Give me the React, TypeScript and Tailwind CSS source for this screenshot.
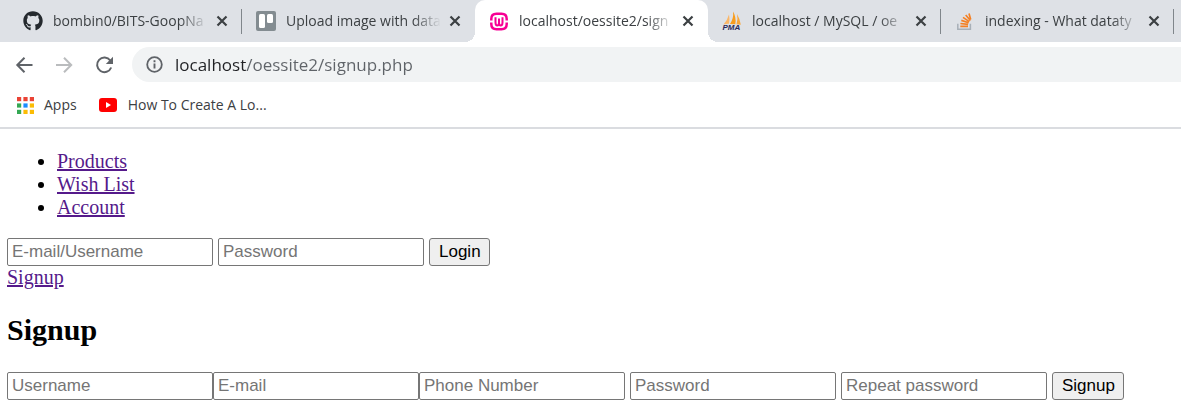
import type { ReactNode } from 'react';
import { FaGithub } from 'react-icons/fa';

function TrelloIcon() {
  return (
    <svg viewBox="0 0 20 20" className="size-5">
      <rect width="20" height="20" rx="2" fill="#838c91" />
      <rect x="3" y="3" width="6" height="14" rx="1.500" fill="#fff" />
      <rect x="11" y="3" width="6" height="9" rx="1.500" fill="#fff" />
    </svg>
  );
}

function WampIcon() {
  return (
    <svg viewBox="0 0 20 20" className="size-5" fill="none" stroke="#f70094">
      <path d="M2.300 9.500V8Q2.300 2.800 7.500 2.800h5Q17.700 2.800 17.700 8v1.500M2.300 11.500V13Q2.300 18.200 7.500 18.200h5q5.200 0 5.200-5.200v-1.500" strokeWidth="2.500" />
      <path d="M6.500 6.200v5q0 3.300 1.800 3.300 1.700 0 1.700-3V7.500v4q0 3 1.700 3 1.800 0 1.800-3.300v-5" strokeWidth="2" />
    </svg>
  );
}

function PhpMyAdminIcon() {
  return (
    <svg viewBox="0 0 20 20" className="size-5 overflow-visible">
      <path d="M7 3.500Q5.500 9 1.500 13.500q3-1 5.500-.8Q8 8.500 7 3.500z" fill="#fbb667" />
      <path d="M11 0.500Q12 7 8 12.900l5.300.3Q14.500 6 11 0.500z" fill="#f89c1c" />
      <path d="M15 3Q16.200 8 14.500 13.200l4.300.5Q18 8 15 3z" fill="#f9a63a" />
      <text x="0.500" y="19" fontSize="8" fontWeight="700" fontStyle="italic" fontFamily="Liberation Sans, sans-serif" fill="#2b2a5a">PMA</text>
    </svg>
  );
}

function StackOverflowIcon() {
  return (
    <svg viewBox="0 0 20 20" className="size-5" fill="none">
      <path d="M2.800 12.800v5.400h12.600v-5.400" stroke="#a8b0b8" strokeWidth="1.500" />
      <path d="M5.300 15.300h7.700M5.400 12.500l7.700.9M6.300 9.400l7.400 2.300M8 6.400l6.300 4.200M10.700 4l4.700 5.500M14 2.500l1.700 6" stroke="#f48024" strokeWidth="1.700" />
    </svg>
  );
}

function CloseIcon() {
  return (
    <svg viewBox="0 0 12 12" className="size-3" fill="none" stroke="#3c4043" strokeWidth="2.200">
      <path d="M1.500 1.500l9 9M10.500 1.500l-9 9" />
    </svg>
  );
}

function AppsIcon() {
  const colours = ['#ea4335', '#ea4335', '#ea4335', '#34a853', '#1a8cff', '#fbbc05', '#34a853', '#fbbc05', '#fbbc05'];
  return (
    <svg viewBox="0 0 17 17" className="size-[17px]">
      {colours.map((fill, i) => (
        <rect key={i} x={(i % 3) * 6.400} y={Math.floor(i / 3) * 6.400} width="4.200" height="4.200" fill={fill} />
      ))}
    </svg>
  );
}

function YouTubeIcon() {
  return (
    <svg viewBox="0 0 18 14" className="h-3.5 w-[18px]">
      <rect width="18" height="14" rx="3" fill="#f00" />
      <path d="M7 4v6l5-3z" fill="#fff" />
    </svg>
  );
}

type Tab = { title: string; icon: ReactNode; active?: boolean; divider?: boolean };

const tabs: Tab[] = [
  { title: 'bombin0/BITS-GoopNa', icon: <FaGithub className="size-5 text-[#24292e]" />, divider: true },
  { title: 'Upload image with data', icon: <TrelloIcon /> },
  { title: 'localhost/oessite2/sign', icon: <WampIcon />, active: true },
  { title: 'localhost / MySQL / oe', icon: <PhpMyAdminIcon />, divider: true },
  { title: 'indexing - What dataty', icon: <StackOverflowIcon />, divider: true },
];

const activeTab =
  "rounded-t-[10px] bg-white before:absolute before:bottom-0 before:-left-2.5 before:size-2.5 before:bg-[radial-gradient(circle_at_0_0,#dee1e6_10px,#fff_10px)] before:content-[''] after:absolute after:bottom-0 after:-right-2.5 after:size-2.5 after:bg-[radial-gradient(circle_at_100%_0,#dee1e6_10px,#fff_10px)] after:content-['']";

function BrowserTab({ title, icon, active, divider }: Tab) {
  return (
    <div className={`relative flex h-full w-[233px] min-w-0 items-center px-3.5 ${active ? activeTab : ''}`}>
      <button type="button" className="flex min-w-0 flex-1 items-center gap-2.5 text-left">
        <span className="shrink-0">{icon}</span>
        <span className="min-w-0 flex-1 overflow-hidden text-[14px] leading-5 whitespace-nowrap text-[#3c4043] [mask-image:linear-gradient(to_right,#000_calc(100%-28px),transparent)]">
          {title}
        </span>
      </button>
      <button type="button" aria-label="Close tab" className="ml-2 shrink-0">
        <CloseIcon />
      </button>
      {divider && <span className="absolute top-[9px] right-0 h-[25px] w-px bg-[#80868b]" />}
    </div>
  );
}

function Field({ label, type = 'text', className = '' }: { label: string; type?: string; className?: string }) {
  return (
    <input
      type={type}
      aria-label={label}
      placeholder={label}
      className={`h-7 w-[206px] min-w-0 rounded-xs border border-[#767676] bg-white px-1 text-[17px] leading-5 text-black placeholder:text-[#757575] placeholder:opacity-100 ${className}`}
    />
  );
}

function SubmitButton({ children }: { children: ReactNode }) {
  return (
    <button type="submit" className="ml-[5px] h-7 rounded-[3px] border border-[#767676] bg-[#efefef] pr-2 pl-[9px] text-[17px] leading-5 text-black">
      {children}
    </button>
  );
}

export default function App() {
  return (
    <div className="min-h-screen bg-white">
      <header className="border-b-2 border-[#dadce0] font-['Open_Sans','Noto_Sans',sans-serif]">
        <div className="flex h-[42px] bg-[#dee1e6] pl-[9px]">
          {tabs.map((tab) => (
            <BrowserTab key={tab.title} {...tab} />
          ))}
        </div>

        <div className="flex h-[45px] items-center pl-3.5">
          <div className="flex w-[118px] shrink-0 items-center gap-5">
            <button type="button" aria-label="Back">
              <svg viewBox="0 0 20 20" className="size-5" fill="none" stroke="#5f6368" strokeWidth="2">
                <path d="M18.500 10H3.500M10.500 2.800L3.300 10l7.200 7.200" />
              </svg>
            </button>
            <button type="button" aria-label="Forward">
              <svg viewBox="0 0 20 20" className="size-5" fill="none" stroke="#babcbe" strokeWidth="2">
                <path d="M2 10h15M10 2.800l7.200 7.200-7.200 7.200" />
              </svg>
            </button>
            <button type="button" aria-label="Reload">
              <svg viewBox="0 0 20 20" className="size-5" fill="none" stroke="#5f6368" strokeWidth="2">
                <path d="M16.300 5.500A7.300 7.300 0 1 0 17.200 12.500" />
                <path d="M19 1.800V9h-7.200z" fill="#5f6368" stroke="none" />
              </svg>
            </button>
          </div>
          <div className="flex h-[35px] min-w-0 flex-1 items-center gap-3 rounded-l-full bg-[#f1f3f4] pl-3.5">
            <svg viewBox="0 0 17 17" className="size-[17px] shrink-0" fill="none" stroke="#5f6368">
              <circle cx="8.500" cy="8.500" r="7.300" strokeWidth="1.800" />
              <path d="M8.500 7.500v5M8.500 4.300v2" strokeWidth="1.900" />
            </svg>
            <input
              type="text"
              aria-label="Address"
              defaultValue="localhost/oessite2/signup.php"
              className="min-w-0 flex-1 bg-[linear-gradient(to_right,#202124_71px,#5f6368_71px)] bg-clip-text text-[17px] leading-6 text-transparent outline-none"
            />
          </div>
        </div>

        <nav aria-label="Bookmarks" className="flex h-10 items-center gap-[22px] pb-1 pl-[17px] text-[14px] leading-5 text-[#3c4043]">
          <a href="#apps" className="flex items-center gap-2.5">
            <AppsIcon />
            Apps
          </a>
          <a href="#video" className="flex items-center gap-[11px]">
            <YouTubeIcon />
            How To Create A Lo...
          </a>
        </nav>
      </header>

      <main className="px-[7px] pt-[21px] font-['Liberation_Serif',serif] text-[20px] leading-[23px] text-black">
        <ul className="list-disc pl-[50px] text-black">
          {['Products', 'Wish List', 'Account'].map((item) => (
            <li key={item}>
              <a href="#" className="text-[#551a8b] underline">{item}</a>
            </li>
          ))}
        </ul>

        <form className="mt-[19px] flex font-['Liberation_Sans',sans-serif]" onSubmit={(e) => e.preventDefault()}>
          <Field label="E-mail/Username" />
          <Field label="Password" type="password" className="ml-[5px]" />
          <SubmitButton>Login</SubmitButton>
        </form>
        <a href="#signup" className="text-[#551a8b] underline">Signup</a>

        <h2 id="signup" className="mt-6 text-[30px] leading-[34px] font-bold">Signup</h2>
        <form className="mt-[25px] flex font-['Liberation_Sans',sans-serif]" onSubmit={(e) => e.preventDefault()}>
          <Field label="Username" />
          <Field label="E-mail" />
          <Field label="Phone Number" />
          <Field label="Password" type="password" className="ml-[5px]" />
          <Field label="Repeat password" type="password" className="ml-[5px]" />
          <SubmitButton>Signup</SubmitButton>
        </form>
      </main>
    </div>
  );
}
